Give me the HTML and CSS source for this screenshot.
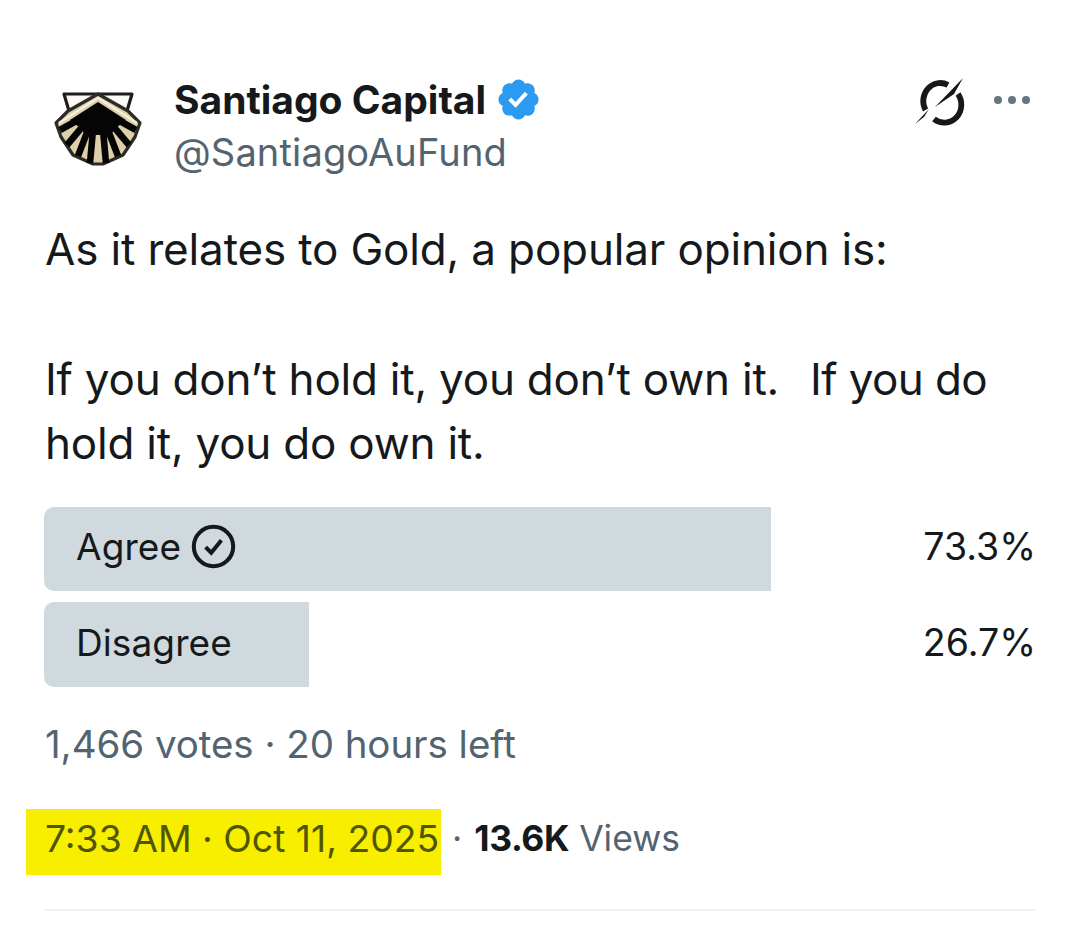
FILE: index.html
```html
<!DOCTYPE html>
<html lang="en">
<head>
<meta charset="utf-8">
<title>Santiago Capital</title>
<link rel="stylesheet" href="styles.css">
</head>
<body>
<main class="tweet">
  <header class="head">
    <svg class="avatar" viewBox="0 0 90 90" aria-hidden="true">
      <path d="M10 10 L78 10 L73 27 L44 12 L15 27 Z" fill="#fbfaf4" stroke="#1d1c18" stroke-width="3.2" stroke-linejoin="round"/>
      <path d="M44 10 L14 27 L2 39 L7 53 L19 71 L39 80 L49 80 L69 71 L81 53 L86 39 L74 27 Z" fill="#dccfa9" stroke="#2c2b24" stroke-width="3.2" stroke-linejoin="round"/>
      <path d="M5 39 L44 14 L83 39" fill="none" stroke="#f4efe0" stroke-width="2.4"/>
      <path d="M44 18 L72 36 L62 44 L56 51 L32 51 L26 44 L16 36 Z" fill="#050505"/>
      <path d="M24 36 L6 46 M29 42 L13 61 M34 46 L24 72 M39 46 L36 79 M49 46 L52 79 M54 46 L64 72 M59 42 L75 61 M64 36 L82 46" fill="none" stroke="#050505" stroke-width="6.6"/>
    </svg>
    <div class="who">
      <div class="name-row">
        <span class="name">Santiago Capital</span>
        <svg class="badge" viewBox="0 0 22 22" aria-hidden="true"><path fill="#2a9bf0" d="M20.396 11c-.018-.646-.215-1.275-.57-1.816-.354-.54-.852-.972-1.438-1.246.223-.607.27-1.264.14-1.897-.131-.634-.437-1.218-.882-1.687-.47-.445-1.053-.75-1.687-.882-.633-.13-1.29-.083-1.897.14-.273-.587-.704-1.086-1.245-1.44S11.647 1.62 11 1.604c-.646.017-1.273.213-1.813.568s-.969.854-1.24 1.44c-.608-.223-1.267-.272-1.902-.14-.635.13-1.22.436-1.69.882-.445.47-.749 1.055-.878 1.688-.13.633-.08 1.29.144 1.896-.587.274-1.087.705-1.443 1.245-.356.54-.555 1.17-.574 1.817.02.647.218 1.276.574 1.817.356.54.856.972 1.443 1.245-.224.606-.274 1.263-.144 1.896.13.634.433 1.218.877 1.688.47.443 1.054.747 1.687.878.633.132 1.29.084 1.897-.136.274.586.705 1.084 1.246 1.439.54.354 1.17.551 1.816.569.647-.016 1.276-.213 1.817-.567s.972-.854 1.245-1.44c.604.239 1.266.296 1.903.164.636-.132 1.22-.447 1.68-.907.46-.46.776-1.044.908-1.681s.075-1.299-.165-1.903c.586-.274 1.084-.705 1.439-1.246.354-.54.551-1.17.569-1.816z"/><path fill="#fff" d="M9.662 14.85l-3.429-3.428 1.293-1.302 2.072 2.072 4.4-4.794 1.347 1.246z"/></svg>
      </div>
      <div class="handle">@SantiagoAuFund</div>
    </div>
    <div class="tools">
      <svg class="grok" viewBox="0 0 50 50" aria-hidden="true">
        <path d="M33 8 A17 18 0 0 0 10.5 33" fill="none" stroke="#15191c" stroke-width="5.8"/>
        <path d="M43 17 A17 18 0 0 1 19 42" fill="none" stroke="#15191c" stroke-width="5.8"/>
        <path d="M48 1 L20 30 L39 17 Z M0 47 L14 32 L9 40 Z" fill="#15191c"/>
      </svg>
      <div class="dots"><i></i><i></i><i></i></div>
    </div>
  </header>

  <p class="body">As it relates to Gold, a popular opinion is:</p>
  <p class="body para">If you don’t hold it, you don’t own it.<span class="gap"></span><span class="tail">If you do</span><br>hold it, you do own it.</p>

  <section class="poll">
    <div class="option">
      <div class="track">
        <div class="bar" style="width:73.3%"></div>
        <span class="label">Agree
          <svg class="chk" viewBox="0 0 40 40" aria-hidden="true"><circle cx="20" cy="20" r="17.5" fill="none" stroke="#15191c" stroke-width="3.6"/><path d="M13 20.5 L18 25.5 L27 14.5" fill="none" stroke="#15191c" stroke-width="3.6"/></svg>
        </span>
      </div>
      <span class="pct">73.3%</span>
    </div>
    <div class="option">
      <div class="track">
        <div class="bar" style="width:26.7%"></div>
        <span class="label">Disagree</span>
      </div>
      <span class="pct">26.7%</span>
    </div>
  </section>

  <p class="meta">1,466 votes · 20 hours left</p>

  <p class="stamp"><span class="mark">7:33 AM · Oct 11, 2025</span><span class="sep">·</span><b class="count">13.6K</b> Views</p>

  <hr class="rule">
</main>
</body>
</html>
```
FILE: styles.css
```css
* { box-sizing: border-box; }
html, body { margin: 0; background: #fff; }
body { font-family: Inter, "Liberation Sans", sans-serif; color: #15191c; }

.tweet { width: 1080px; height: 931px; padding: 70px 44px 0 45px; overflow: hidden; }

.head { display: flex; align-items: flex-start; height: 110px; }
.avatar { width: 90px; height: 90px; margin: 14px 0 0 9px; flex: none; }
.who { margin-left: 30px; padding-top: 6px; }
.name-row { display: flex; align-items: center; gap: 10px; height: 46px; }
.name { font-size: 39px; font-weight: 700; letter-spacing: 0; }
.badge { width: 47px; height: 47px; margin-left: -1px; }
.handle { font-size: 38px; letter-spacing: 0.15px; color: #536471; margin-top: 7px; }
.tools { margin-left: auto; display: flex; align-items: flex-start; gap: 29px; padding-top: 7px; margin-right: 6px; }
.grok { width: 50px; height: 50px; }
.dots { display: flex; gap: 6px; margin-top: 19px; }
.dots i { width: 8px; height: 8px; border-radius: 50%; background: #65757f; }

.body { margin: 0; font-size: 44px; line-height: 65px; letter-spacing: -0.16px; }
.tweet > .body:first-of-type { margin-top: 37px; }
.para { margin-top: 65px; line-height: 64px; letter-spacing: -0.22px; }
.gap { display: inline-block; width: 31px; }
.tail { letter-spacing: -0.6px; }

.poll { display: flex; flex-direction: column; gap: 11px; margin-top: 32px; margin-left: -1px; }
.option { display: grid; align-items: center; height: 84px; }
.option:last-child { height: 85px; }
.track { grid-area: 1 / 1; position: relative; height: 100%; display: flex; align-items: center; padding: 0 0 5px 32px; }
.bar { position: absolute; left: 0; top: 0; bottom: 0; background: #cfd9de; border-radius: 10px 0 0 10px; }
.label { position: relative; display: flex; align-items: center; gap: 10px; font-size: 37px; letter-spacing: 0.1px; }
.chk { width: 45px; height: 45px; }
.pct { grid-area: 1 / 1; justify-self: end; position: relative; font-size: 37.5px; letter-spacing: 0; padding-bottom: 5px; white-space: nowrap; }

.meta { margin: 34px 0 0; font-size: 38.5px; line-height: 46px; letter-spacing: -0.05px; color: #536471; }

.stamp { margin: 42px 0 0; display: flex; align-items: center; font-size: 35.5px; color: #536471; height: 66px; padding-bottom: 8px; }
.mark { display: flex; align-items: center; height: 66px; margin: 0 0 -8px -19px; padding: 0 1px 8px 19px; width: 415px; font-size: 37.3px; background: #f8ee00; color: #505600; white-space: nowrap; }
.sep { margin: 0 12px 0 11px; }
.count { color: #15191c; font-weight: 700; margin-right: 10px; letter-spacing: -0.4px; }

.rule { margin: 34px 0 0 -1px; border: 0; height: 2px; background: #eff3f4; }
```
